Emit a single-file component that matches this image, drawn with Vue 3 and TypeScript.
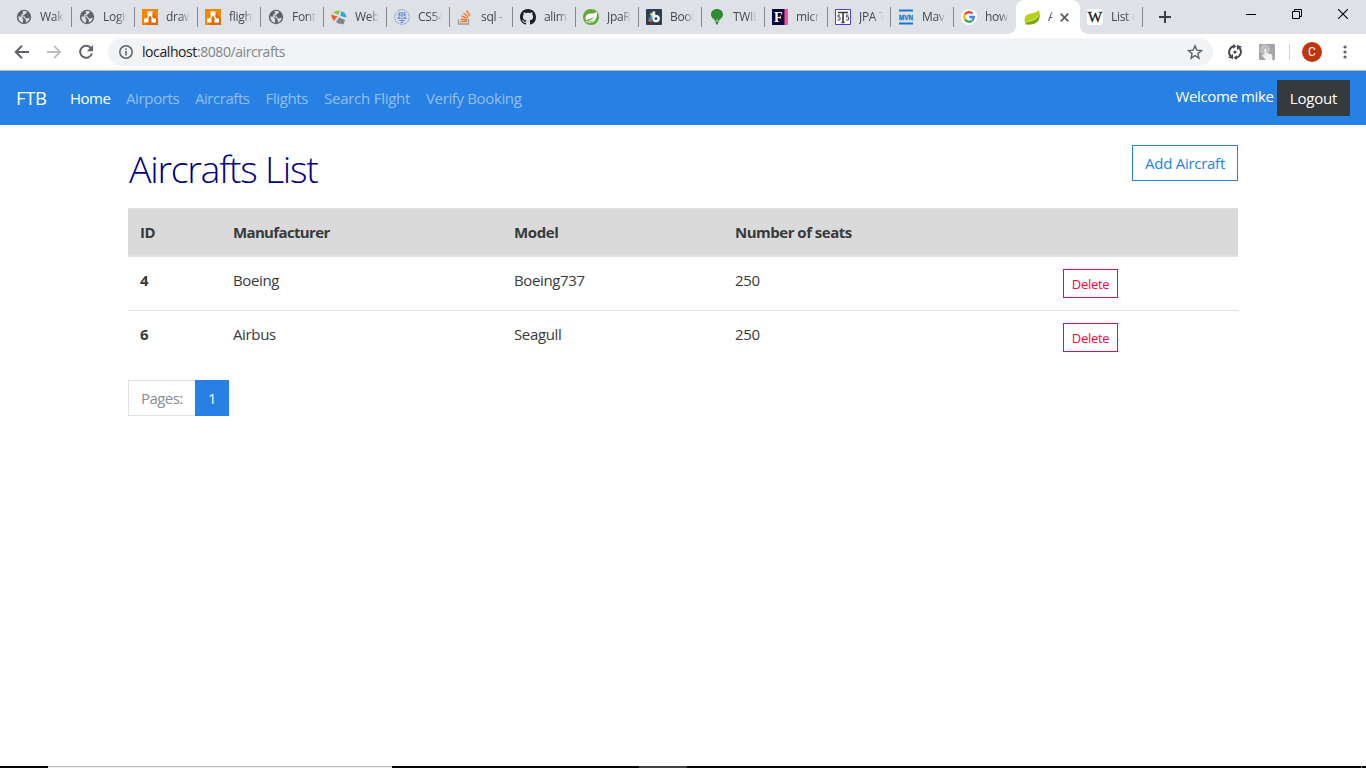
<script setup lang="ts">
interface Tab { icon: string; title: string; active?: boolean }
interface Aircraft { id: number; manufacturer: string; model: string; seats: number }

const tabs: Tab[] = [
  { icon: 'globe', title: 'Waka' },
  { icon: 'globe', title: 'Login' },
  { icon: 'draw', title: 'draw.' },
  { icon: 'draw', title: 'flight' },
  { icon: 'globe', title: 'Fonts' },
  { icon: 'web', title: 'Web' },
  { icon: 'seal', title: 'CS54' },
  { icon: 'stack', title: 'sql - j' },
  { icon: 'github', title: 'alim' },
  { icon: 'spring', title: 'JpaR' },
  { icon: 'boot', title: 'Boot' },
  { icon: 'balloon', title: 'TWIL' },
  { icon: 'eff', title: 'micr' },
  { icon: 'jpa', title: 'JPA T' },
  { icon: 'mvn', title: 'Mav' },
  { icon: 'google', title: 'how t' },
  { icon: 'leaf', title: 'A', active: true },
  { icon: 'wiki', title: 'List o' },
]

const links = [
  { label: 'Home', cls: 'home' },
  { label: 'Airports', cls: 'airports' },
  { label: 'Aircrafts', cls: 'aircrafts' },
  { label: 'Flights', cls: 'flights' },
  { label: 'Search Flight', cls: 'search' },
  { label: 'Verify Booking', cls: 'verify' },
]

const aircrafts: Aircraft[] = [
  { id: 4, manufacturer: 'Boeing', model: 'Boeing737', seats: 250 },
  { id: 6, manufacturer: 'Airbus', model: 'Seagull', seats: 250 },
]
</script>

<template>
  <div class="window">
    <header class="strip">
      <div v-for="(tab, i) in tabs" :key="i" class="tab" :class="{ active: tab.active, nosep: i === 15 }">
        <svg class="fav" width="16" height="16" viewBox="0 0 16 16">
          <g v-if="tab.icon === 'globe'">
            <circle cx="8" cy="8" r="7.2" fill="#5f6368" />
            <path d="M2.300 7.600C4 7 5.500 7.800 6.800 8.600 8 9.300 8 10.300 7.200 11.300L7 13.800C4.400 13.500 2.300 11 2.300 7.600z" fill="#dee1e6" />
            <path d="M6.500 2.500C8 1.900 9.800 2 11 2.700L10.400 4.200 8.600 5 8.200 6.400 6.600 6.300 6.200 7.300 8.800 7.600 9.600 9.300 11.600 9.400 13.700 8.600C13.500 11 11.800 13 9.900 13.500L9.700 11 7.500 9.600 5 7.600 5.400 5.500 7.200 4.400z" fill="#dee1e6" />
            <path d="M6.500 8.500L8.600 10.500 8 13" fill="none" stroke="#5f6368" stroke-width="1.700" />
          </g>
          <g v-else-if="tab.icon === 'draw'">
            <path d="M0 0h16v16H0z" fill="#f08705" /><path d="M10 3l6 7v6H5l-3-3z" fill="#df6c0c" />
            <path d="M8 5L4.500 11M8 5l3.500 6" stroke="#fff" stroke-width="1.400" />
            <path d="M5.500 2.500h5v4h-5zM2 9.500h4.500v4H2zM9.500 9.500H14v4H9.500z" fill="#fff" />
          </g>
          <g v-else-if="tab.icon === 'web'">
            <path d="M2 3.500Q5 1.200 9 1.500L7.500 6z" fill="#8bc53f" />
            <path d="M10 2.500Q15 3 15.500 8.500L9.500 7z" fill="#25a9e0" />
            <path d="M0 5.500l6.500 2L3 12Q.5 9.500 0 5.500z" fill="#f15a29" />
            <path d="M8 8.500l6 2.500-1.500 4.500-2-1-2 .5-3.500-2z" fill="#808285" />
          </g>
          <g v-else-if="tab.icon === 'seal'" fill="none" stroke="#6f93d2">
            <circle cx="8" cy="8" r="7.300" stroke-dasharray="1.600 .8" />
            <path d="M4 4.500l2-1.500 2 1.500 2-1.500 2 1.500M3.500 6h9M5 7.500l-1.500 2h3zM11 7.500l-1.500 2h3zM8 3v10M5.500 4v3M10.500 4v3M5 11.500h6M6.500 13.500h3" stroke-width="1" />
          </g>
          <g v-else-if="tab.icon === 'stack'" fill="none">
            <path d="M1.500 10v5h10v-5" stroke="#9b9da0" stroke-width="1.300" />
            <path d="M3.500 12.500h6.500M3.700 10l6.500 1M4.500 7l6 2.400M6.500 4l5 4M9.500 1.500l3.500 5.300" stroke="#f2792a" stroke-width="1.400" />
          </g>
          <path v-else-if="tab.icon === 'github'" fill="#1b1f23" fill-rule="evenodd" d="M8 0C3.580 0 0 3.580 0 8c0 3.540 2.290 6.530 5.470 7.590.4.070.550-.170.550-.380 0-.190-.010-.820-.010-1.490-2.010.370-2.530-.490-2.690-.940-.090-.230-.480-.940-.820-1.130-.280-.150-.680-.520-.010-.530.630-.010 1.080.580 1.230.820.720 1.210 1.870.870 2.330.660.070-.520.280-.870.510-1.070-1.780-.200-3.640-.890-3.640-3.950 0-.870.310-1.590.820-2.150-.080-.200-.360-1.020.080-2.120 0 0 .670-.210 2.200.820.640-.180 1.320-.270 2-.270s1.360.090 2 .270c1.530-1.040 2.200-.820 2.200-.820.440 1.100.160 1.920.080 2.120.510.560.820 1.270.820 2.150 0 3.070-1.870 3.750-3.650 3.950.290.250.540.730.540 1.480 0 1.070-.010 1.930-.010 2.200 0 .210.150.460.550.380A8.010 8.010 0 0 0 16 8c0-4.420-3.580-8-8-8z" />
          <g v-else-if="tab.icon === 'spring'">
            <circle cx="8" cy="8" r="8" fill="#5da839" />
            <path d="M13.500 2.500C15 7.500 13 11.500 9 11.700H4.500C7.500 11 10.500 9.800 12 7 9 10 6.500 9.500 3 11.200 1.500 7.500 3.500 5 7.500 4.600 10.500 4.500 12.500 4.300 13.500 2.500z" fill="#fff" />
            <path d="M3 12.500c2.500 1.200 7.500.9 9.500-1.500" fill="none" stroke="#fff" />
          </g>
          <g v-else-if="tab.icon === 'boot'">
            <rect width="16" height="16" rx="1" fill="#2c3e50" />
            <path d="M6.500 2.500v9L2 12z" fill="#27a9e3" /><path d="M2.500 8l4 5H3z" fill="#e64c3c" />
            <path d="M3.500 5L6.500 3v5z" fill="#f4d03f" />
            <path d="M6.500 2.500h2.700V6Q13.800 5.300 13.800 9.500T9.500 13.300Q6.500 13 6.500 10z" fill="#fff" /><circle cx="10" cy="9.600" r="1.400" fill="#2c3e50" />
          </g>
          <g v-else-if="tab.icon === 'balloon'">
            <path d="M8 0C11.500 0 14 2.300 14 5.500 14 9 9.500 11.500 8.800 15.500H7.200C6.500 11.500 2 9 2 5.500 2 2.300 4.500 0 8 0z" fill="#2e8b2f" />
            <path d="M3.500 9l3.300 4M12.500 9l-3.300 4M8 10v3" stroke="#dee1e6" stroke-width=".8" />
          </g>
          <g v-else-if="tab.icon === 'eff'">
            <path d="M0 0h12v16H0z" fill="#08083c" /><path d="M12 0h1v16h-1z" fill="#8d2f72" /><path d="M13 0h3v16h-3z" fill="#f354a1" />
            <text x="2" y="13" class="serif" font-size="14" fill="#fff">F</text>
          </g>
          <g v-else-if="tab.icon === 'jpa'">
            <path d="M.5.5h15v15H.5z" fill="#fff" stroke="#4b3bd8" />
            <path d="M3 3.500h10M8 3.500v9.500M6.500 13.500h3" fill="none" stroke="#3b3944" stroke-width="1.600" />
            <path d="M5 6H3v2h2v3H2.500M13.500 6h-2v2h2v3H11" fill="none" stroke="#3b3944" stroke-width=".9" />
          </g>
          <g v-else-if="tab.icon === 'mvn'">
            <path d="M1 1.500h14M1 14.500h14" stroke="#1976d2" stroke-width="1.800" />
            <text x="1" y="11" class="bold" font-size="8" textLength="14" lengthAdjust="spacingAndGlyphs" fill="#1976d2" stroke="#1976d2" stroke-width=".3">MVN</text>
          </g>
          <g v-else-if="tab.icon === 'google'">
            <circle cx="8" cy="8" r="8" fill="#fff" />
            <g fill="none" stroke-width="2.300">
              <path d="M4 5.400A4.800 4.800 0 0 1 11.500 4.600" stroke="#ea4335" />
              <path d="M4.100 10.600A4.800 4.800 0 0 1 4 5.400" stroke="#fbbc05" />
              <path d="M11.200 11.600A4.800 4.800 0 0 1 4.100 10.600" stroke="#34a853" />
              <path d="M8.200 8h4.600A4.800 4.800 0 0 1 11.200 11.600" stroke="#4285f4" />
            </g>
          </g>
          <g v-else-if="tab.icon === 'leaf'">
            <path d="M15 1C17 8 15 13.500 9.500 14.500 6 15.300 3 14.500 1.500 15 -.5 11 .5 6.500 5 5 9 3.700 12.500 4 15 1z" fill="#b9d01f" />
            <path d="M15.800 5.500C13.500 11 8 11.800 1.500 13.800V15.500C8 16 15.500 15.500 15.800 5.500z" fill="#78a818" />
            <path d="M1.500 13.500C6 11.800 11 11.300 14.500 7" fill="none" stroke="#e2ed79" stroke-width=".7" />
          </g>
          <g v-else>
            <rect width="16" height="16" rx="3" fill="#fff" />
            <text x=".8" y="13" class="thin" font-size="14.500" textLength="14.500" lengthAdjust="spacingAndGlyphs" fill="#222" stroke="#222" stroke-width=".3">W</text>
          </g>
        </svg>
        <span class="title">{{ tab.title }}</span>
        <svg v-if="tab.active" class="close" width="9" height="9" viewBox="0 0 9 9"><path d="M.7.7l7.600 7.600m0-7.600L.7 8.300" stroke="#5a5d61" stroke-width="1.700" /></svg>
      </div>
      <svg class="plus" width="12" height="12" viewBox="0 0 12 12"><path d="M6 0v12M0 6h12" stroke="#3c4043" stroke-width="2" /></svg>
      <div class="controls">
        <svg width="10" height="10" viewBox="0 0 10 10"><path d="M0 5.500h10" stroke="#000" /></svg>
        <svg width="10" height="10" viewBox="0 0 10 10"><path d="M.5 2.500h7v7h-7zM2.500 2V.5h7v7H8" fill="none" stroke="#000" /></svg>
        <svg width="10" height="10" viewBox="0 0 10 10"><path d="M0 0l10 10M10 0L0 10" stroke="#000" stroke-width="1.100" /></svg>
      </div>
    </header>

    <div class="toolbar">
      <svg class="back" width="16" height="14" viewBox="0 0 16 14"><path d="M15 7H2M8 .8L1.800 7 8 13.200" fill="none" stroke="#5f6368" stroke-width="2" /></svg>
      <svg class="forward" width="16" height="14" viewBox="0 0 16 14"><path d="M1 7h13M8 .8L14.200 7 8 13.200" fill="none" stroke="#bcbec1" stroke-width="1.800" /></svg>
      <svg class="reload" width="16" height="16" viewBox="0 0 16 16"><path d="M13.200 4.500A6 6 0 1 0 13.900 9.500" fill="none" stroke="#5f6368" stroke-width="2" /><path d="M15 1v6.200H8.800z" fill="#5f6368" /></svg>
      <div class="omnibox">
        <svg width="14" height="14" viewBox="0 0 14 14"><circle cx="7" cy="7" r="6.200" fill="none" stroke="#5f6368" stroke-width="1.500" /><path d="M7 6v4.500M7 3.500V5" stroke="#5f6368" stroke-width="1.600" /></svg>
        <span class="url"><b>localhost</b>:8080/aircrafts</span>
        <svg class="star" width="16" height="16" viewBox="0 0 16 16"><path d="M8 1.800l1.800 4.300 4.700.4-3.600 3.100 1.100 4.600L8 11.700l-4 2.500 1.100-4.600-3.600-3.100 4.700-.4z" fill="none" stroke="#5f6368" stroke-width="1.400" /></svg>
      </div>
      <svg class="sync" width="16" height="16" viewBox="0 0 16 16">
        <path d="M7 2.300A6 6 0 0 0 3.600 12.200M9 13.700A6 6 0 0 0 12.400 3.800" fill="none" stroke="#45484b" stroke-width="1.900" />
        <path d="M6.200 0L9.500 2.300 6.200 4.800zM9.800 11.200L6.500 13.700l3.300 2.300zM1 13.500l5-3.500v5zM15 2.500L10 6V1z" fill="#45484b" /><circle cx="8" cy="8" r="1.600" fill="#45484b" />
      </svg>
      <svg class="touch" width="16" height="16" viewBox="0 0 16 16"><rect width="16" height="16" rx="1" fill="#a5a5a5" /><circle cx="6" cy="5.500" r="4.200" fill="#bbb" stroke="#d5d5d5" /><path d="M5.500 5q1-1 1.800 0v4l5.200 1.200q1.500 1 .5 5.800H7L3 11.500q0-1.200 1.200-1l1.300 1z" fill="#f3f6f8" /></svg>
      <i class="bar"></i>
      <span class="avatar">C</span>
      <svg class="dots" width="4" height="14" viewBox="0 0 4 14" fill="#5f6368"><circle cx="2" cy="2" r="1.600" /><circle cx="2" cy="7" r="1.600" /><circle cx="2" cy="12" r="1.600" /></svg>
    </div>

    <nav class="navbar">
      <a class="brand">FTB</a>
      <a v-for="link in links" :key="link.cls" class="link" :class="link.cls">{{ link.label }}</a>
      <span class="welcome">Welcome mike</span>
      <button class="logout">Logout</button>
    </nav>

    <main>
      <div class="head">
        <h1>Aircrafts List</h1>
        <button class="add">Add Aircraft</button>
      </div>
      <table>
        <colgroup><col class="c1" /><col class="c2" /><col class="c3" /><col class="c4" /><col /></colgroup>
        <thead>
          <tr><th>ID</th><th class="t-man">Manufacturer</th><th>Model</th><th class="t-seats">Number of seats</th><th></th></tr>
        </thead>
        <tbody>
          <tr v-for="a in aircrafts" :key="a.id">
            <th>{{ a.id }}</th><td>{{ a.manufacturer }}</td><td>{{ a.model }}</td><td>{{ a.seats }}</td>
            <td><button class="delete">Delete</button></td>
          </tr>
        </tbody>
      </table>
      <div class="pages"><span class="label">Pages:</span><span class="current">1</span></div>
    </main>

    <footer><i class="searchbox"></i><i class="task"></i><i class="peek"></i></footer>
  </div>
</template>

<style>
body { margin: 0; background: #fff; overflow: hidden; }
</style>

<style scoped>
* { box-sizing: border-box; }
.window { width: 1366px; height: 768px; display: flex; flex-direction: column; font-family: "Open Sans", "Noto Sans", sans-serif; font-size: 15px; font-stretch: 88%; letter-spacing: -.36px; line-height: 22px; color: #373a3c; background: #fff; }
svg { display: block; flex: none; letter-spacing: 0; }
button { font: inherit; letter-spacing: inherit; border-radius: 0; margin: 0; padding: 0; white-space: nowrap; }
.strip { height: 34px; flex: none; background: #dee1e6; display: flex; align-items: center; padding-left: 8px; }
.tab { width: 63px; height: 34px; flex: none; display: flex; align-items: center; padding-left: 8px; position: relative; }
.tab::after { content: ""; position: absolute; right: -1px; top: 7px; width: 1px; height: 20px; background: #85888d; }
.tab.active::after, .tab.nosep::after { display: none; }
.tab.active { width: 64px; margin-right: -1px; background: #fff; border-radius: 8px 8px 0 0; }
.tab.active::before { content: ""; position: absolute; left: -8px; right: -8px; bottom: 0; height: 8px; background: radial-gradient(circle at 0 0, transparent 7.500px, #fff 8px) 0 0 / 8px 8px no-repeat, radial-gradient(circle at 100% 0, transparent 7.500px, #fff 8px) 100% 0 / 8px 8px no-repeat; }
.title { width: 24px; margin-left: 8px; overflow: hidden; white-space: nowrap; font-size: 12px; letter-spacing: -.3px; line-height: 18px; color: #45484c; -webkit-mask-image: linear-gradient(90deg, #000 60%, transparent); mask-image: linear-gradient(90deg, #000 60%, transparent); }
.active .title { width: 5px; }
.close { margin-left: 6.500px; }
.serif { font-family: "Liberation Serif", serif; font-weight: 700; }
.thin { font-family: "Liberation Serif", serif; }
.bold { font-family: "Liberation Sans", sans-serif; font-weight: 700; }
.plus { margin-left: 17px; }
.controls { margin-left: auto; display: flex; gap: 36px; padding-right: 18px; margin-bottom: 6px; }
.toolbar { height: 37px; flex: none; border-bottom: 1px solid #b5b4b6; display: flex; align-items: center; padding-left: 14px; }
.forward { margin-left: 16px; }
.reload { margin-left: 16px; }
.omnibox { width: 1105px; height: 28px; margin-left: 14px; border-radius: 14px; background: #f1f3f4; display: flex; align-items: center; padding: 0 10px 0 11px; }
.url { margin-left: 9px; font-size: 14px; letter-spacing: -.42px; color: #80868b; }
.url b { font-weight: 400; color: #202124; }
.star { margin-left: auto; }
.sync { margin-left: 14px; }
.touch { margin-left: 16px; }
.bar { width: 1px; height: 16px; background: #cfd1d4; margin-left: 14px; }
.avatar { width: 20px; height: 20px; margin-left: 12px; border-radius: 50%; background: #bf360c; color: #fff; font: 12px/20px Roboto, sans-serif; letter-spacing: 0; text-align: center; }
.dots { margin-left: 21px; }
.navbar { height: 54px; flex: none; background: #2780e3; display: flex; align-items: center; padding: 0 16px; white-space: nowrap; }
.brand { width: 54px; font-size: 18.500px; color: #fff; }
.link { color: rgba(255, 255, 255, .5); }
.home { width: 56px; color: #fff; letter-spacing: -.5px; }
.airports { width: 69px; }
.aircrafts { width: 70.500px; letter-spacing: -.45px; }
.flights { width: 58.500px; }
.search { width: 102px; letter-spacing: -.25px; }
.welcome { width: 98px; margin: 0 3.500px 4px auto; color: #fff; }
.logout { width: 73px; height: 36px; border: 0; background: #373a3c; color: #fff; letter-spacing: -.2px; }
main { flex: 1; width: 1110px; margin: 0 auto; padding-top: 20px; }
.head { display: flex; justify-content: space-between; align-items: flex-start; height: 63px; }
h1 { margin: 1px 0 0 1px; font-size: 37.500px; font-weight: 300; letter-spacing: -1.300px; line-height: 45px; color: #000080; white-space: nowrap; }
.add { width: 106px; height: 36px; border: 1px solid #2780e3; background: #fff; color: #2780e3; letter-spacing: -.27px; }
table { width: 1110px; border-spacing: 0; table-layout: fixed; text-align: left; }
.c1 { width: 93px; } .c2 { width: 281px; } .c3 { width: 221px; } .c4 { width: 328px; }
th, td { padding: 12px 12px 0; vertical-align: top; }
th { font-weight: 700; }
.t-man { letter-spacing: -.65px; }
.t-seats { letter-spacing: -.5px; }
thead th { height: 49px; background: #dadada; border-top: 1px solid #dee2e6; border-bottom: 2px solid #dee2e6; }
tbody tr:first-child > * { height: 53px; padding-top: 12px; }
tbody tr + tr > * { height: 54px; border-top: 1px solid #dee2e6; }
.delete { display: block; width: 55px; height: 29px; border: 1px solid #ee0a42; background: #fff; color: #ff0039; font-size: 13px; letter-spacing: -.3px; }
.pages { display: flex; margin-top: 16px; height: 36px; line-height: 36px; }
.label { width: 67px; border: 1px solid #dee2e6; border-right: 0; line-height: 35px; padding-left: 12px; color: #868e96; letter-spacing: -.55px; }
.current { width: 34px; background: #2780e3; color: #fff; text-align: center; }
footer { height: 2px; flex: none; background: #070707; display: flex; }
footer i { height: 2px; }
.searchbox { width: 344px; margin-left: 48px; background: linear-gradient(#b9b9b9 50%, #f0f0f0 50%); }
.task { width: 48px; margin-left: 247px; background: #444; }
.peek { width: 1px; margin-left: 674px; background: #777; }
</style>
